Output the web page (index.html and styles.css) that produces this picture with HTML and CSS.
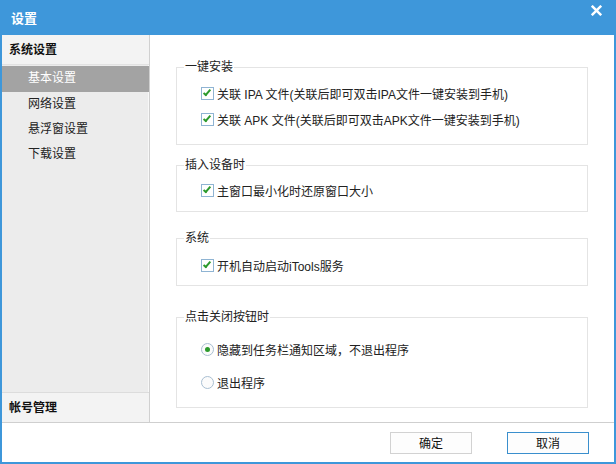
FILE: index.html
```html
<!DOCTYPE html>
<html lang="zh-CN">
<head>
  <meta charset="UTF-8">
  <title>设置</title>
  <link rel="stylesheet" href="styles.css">
</head>
<body>
  <div class="window">
    <!-- タイトルバー -->
    <div class="titlebar">
      <span class="title">设置</span>
      <svg class="close" viewBox="0 0 10 10">
        <path d="M1.5 1.5L8.5 8.5M8.5 1.5L1.5 8.5" stroke="#fff" stroke-width="2.2" stroke-linecap="square"/>
      </svg>
    </div>

    <div class="main">
      <!-- 左メニュー -->
      <div class="sidebar">
        <div class="side-head">系统设置</div>
        <ul class="side-menu">
          <li class="active">基本设置</li>
          <li>网络设置</li>
          <li>悬浮窗设置</li>
          <li>下载设置</li>
        </ul>
        <div class="side-foot">帐号管理</div>
      </div>

      <!-- 設定内容 -->
      <div class="content">
        <fieldset class="group g1">
          <legend>一键安装</legend>
          <label class="row"><span class="check"></span>关联 IPA 文件(关联后即可双击IPA文件一键安装到手机)</label>
          <label class="row"><span class="check"></span>关联 APK 文件(关联后即可双击APK文件一键安装到手机)</label>
        </fieldset>

        <fieldset class="group g2">
          <legend>插入设备时</legend>
          <label class="row"><span class="check"></span>主窗口最小化时还原窗口大小</label>
        </fieldset>

        <fieldset class="group g3">
          <legend>系统</legend>
          <label class="row"><span class="check"></span>开机自动启动iTools服务</label>
        </fieldset>

        <fieldset class="group g4">
          <legend>点击关闭按钮时</legend>
          <label class="row tall"><span class="radio on"></span>隐藏到任务栏通知区域，不退出程序</label>
          <label class="row tall"><span class="radio"></span>退出程序</label>
        </fieldset>
      </div>
    </div>

    <!-- 下部ボタン -->
    <div class="footer">
      <button class="btn" type="button">确定</button>
      <button class="btn primary" type="button">取消</button>
    </div>
  </div>
</body>
</html>
```

FILE: styles.css
```css
/* リセット */
*, *::before, *::after { margin:0; padding:0; box-sizing:border-box; }
html, body { width:616px; height:464px; overflow:hidden; }
body {
  font-family:"Liberation Sans","Noto Sans CJK SC",sans-serif;
  font-size:12px; color:#222; background:#fff;
}

/* ウィンドウ枠 */
.window {
  width:616px; height:464px;
  display:flex; flex-direction:column;
  border:2px solid #3e97da; border-top:none;
}

/* タイトルバー */
.titlebar {
  height:35px; flex:none;
  background:#3e97da; color:#fff;
  display:flex; align-items:center; justify-content:space-between;
  padding:0 10px 0 10px;
  margin:0 -2px;
}
.title { font-size:13px; font-weight:bold; padding-left:1px; margin-top:-1px; }
.close { width:11px; height:11px; align-self:flex-start; margin-top:5px; margin-right:4px; }

/* 本体 */
.main { flex:1; display:flex; min-height:0; }

/* サイドバー */
.sidebar {
  width:148px; flex:none;
  display:flex; flex-direction:column;
  background:#ececec;
  border-right:1px solid #d0d0d0;
  box-shadow:inset -1px 0 0 #f8f8f8;
}
.side-head {
  height:30px; line-height:30px; padding-left:7px;
  font-weight:bold; background:#f3f3f3; color:#111;
  border-bottom:1px solid #e2e2e2;
}
.side-menu { list-style:none; flex:1; }
.side-menu li { height:25px; line-height:25px; padding-left:26px; color:#222; }
.side-menu li:first-child { margin-top:1px; }
.side-menu li.active { background:#a3a3a3; color:#fff; height:26px; }
.side-foot {
  height:30px; line-height:30px; padding-left:7px;
  font-weight:bold; color:#111; background:#f3f3f3;
  border-top:1px solid #dcdcdc;
}

/* 設定内容 */
.content {
  flex:1; padding:24px 26px 0 26px;
  display:flex; flex-direction:column;
}
.group {
  border:1px solid #e4e4e4;
  padding:0;
}
.group legend {
  margin-left:7px; padding:0 1px;
  line-height:16px; color:#222;
}
.g1 { padding-top:5px; padding-bottom:12px; }
.g2 { margin-top:12px; padding-top:4px; padding-bottom:8px; }
.g3 { margin-top:18px; padding-top:6px; padding-bottom:7px; }
.g4 { margin-top:23px; padding-top:8px; padding-bottom:8px; }

.row {
  display:flex; align-items:center; height:26px;
  padding-left:24px; white-space:nowrap;
}
.row.tall { height:33px; }

/* チェックボックス */
.check {
  width:13px; height:13px; margin-right:3px; flex:none;
  border:1px solid #8fb4d3; background:#fff; position:relative;
}
.check::after {
  content:""; position:absolute; left:3px; top:0px;
  width:4px; height:8px;
  border:solid #2c9a2c; border-width:0 2px 2px 0;
  transform:rotate(40deg);
}

/* ラジオ */
.radio {
  width:13px; height:13px; margin-right:3px; flex:none;
  border:1px solid #a9bfd2; border-radius:50%; background:#fbfbfb;
  display:flex; align-items:center; justify-content:center;
}
.radio.on::after {
  content:""; width:5px; height:5px; border-radius:50%; background:#2c9a2c;
}

/* フッター */
.footer {
  height:40px; flex:none;
  border-top:1px solid #cfcfcf;
  display:flex; align-items:center; justify-content:flex-end;
  gap:35px; padding-right:25px;
}
.btn {
  width:82px; height:22px;
  font:inherit; color:#111;
  background:#fdfdfd; border:1px solid #d2d2d2;
}
.btn.primary { border-color:#3a8fcd; }
```
